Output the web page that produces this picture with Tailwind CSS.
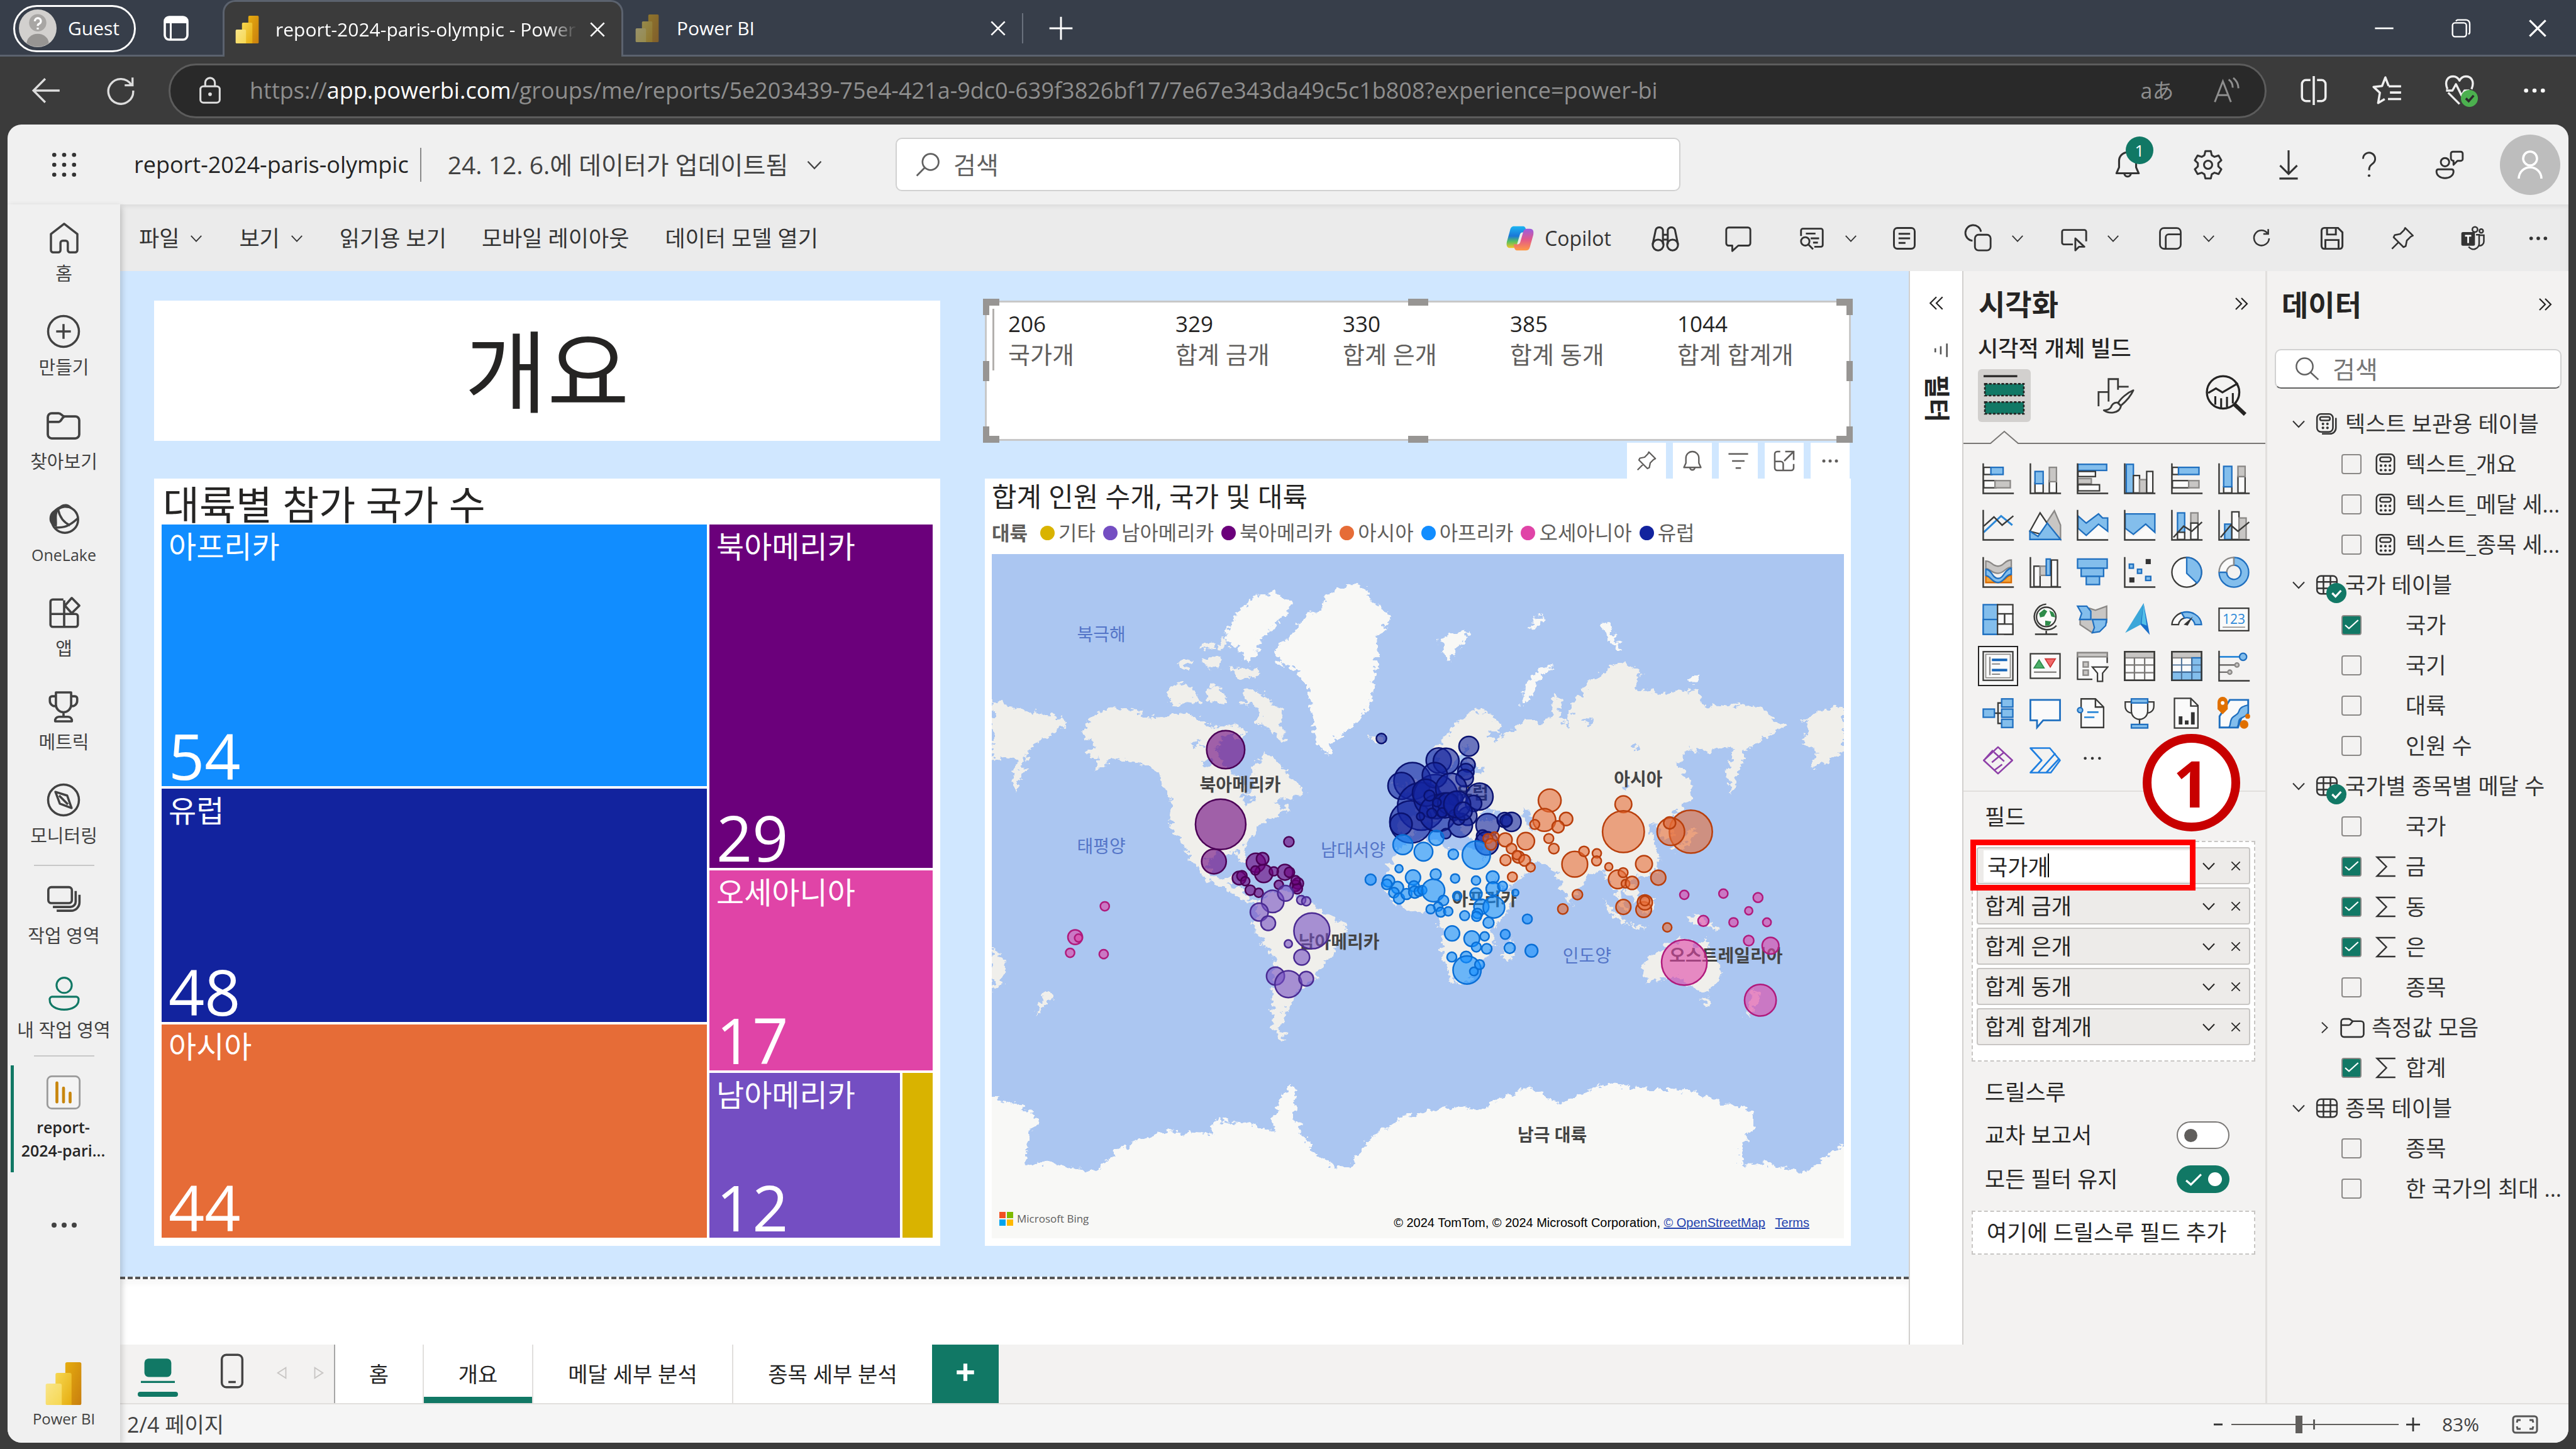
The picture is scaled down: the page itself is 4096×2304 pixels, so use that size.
<!DOCTYPE html>
<html lang="ko">
  <head>
    <meta charset="UTF-8" />
    <meta name="viewport" content="width=device-width, initial-scale=1.0" />
    <title>report-2024-paris-olympic - Power BI</title>
    <script src="https://cdn.jsdelivr.net/npm/@tailwindcss/browser@4"></script>
  </head>
  <body class="h-screen overflow-hidden bg-[#3b3b3b] text-[#242424] [font-family:'Open_Sans','Noto_Sans_CJK_KR',sans-serif]">
    <!-- icon sprite -->
    <svg class="absolute size-0">
      <defs>
        <linearGradient id="pbi1" x1="0" y1="0" x2="1" y2="1"><stop offset="0" stop-color="#e6ad10" /><stop offset="1" stop-color="#c87e0e" /></linearGradient>
        <linearGradient id="pbi2" x1="0" y1="0" x2="1" y2="1"><stop offset="0" stop-color="#f6d751" /><stop offset="1" stop-color="#e6ad10" /></linearGradient>
        <linearGradient id="pbi3" x1="0" y1="0" x2="1" y2="1"><stop offset="0" stop-color="#f9e589" /><stop offset="1" stop-color="#f6d751" /></linearGradient>
        <linearGradient id="cop1" x1="0" y1="0" x2="0" y2="1"><stop offset="0" stop-color="#1cb4f2" /><stop offset=".45" stop-color="#1a77d8" /><stop offset=".7" stop-color="#57c05f" /><stop offset="1" stop-color="#f7c325" /></linearGradient>
        <linearGradient id="cop2" x1="0" y1="0" x2="0" y2="1"><stop offset="0" stop-color="#9b5de0" /><stop offset=".5" stop-color="#e2588a" /><stop offset="1" stop-color="#ff9a45" /></linearGradient>
        <filter id="coast" x="0" y="0" width="1" height="1"><feTurbulence type="fractalNoise" baseFrequency=".08" numOctaves="4" seed="4" /><feDisplacementMap in="SourceGraphic" scale="26" xChannelSelector="R" yChannelSelector="G" /></filter>
      </defs>
      <symbol id="chev" viewBox="0 0 24 24"><path d="M3 7.500l9 9.500 9-9.500" fill="none" stroke="currentColor" stroke-width="2" /></symbol>
      <symbol id="x" viewBox="0 0 24 24"><path d="M4 4l16 16M20 4L4 20" fill="none" stroke="currentColor" stroke-width="2" /></symbol>
      <symbol id="dots" viewBox="0 0 24 24"><g fill="currentColor"><circle cx="4" cy="12" r="2" /><circle cx="12" cy="12" r="2" /><circle cx="20" cy="12" r="2" /></g></symbol>
      <symbol id="search" viewBox="0 0 24 24"><g fill="none" stroke="currentColor" stroke-width="1.500"><circle cx="14" cy="9.500" r="7" /><path d="M9 14.500l-7 7" /></g></symbol>
      <symbol id="search-l" viewBox="0 0 24 24"><g fill="none" stroke="currentColor" stroke-width="1.400"><circle cx="10" cy="9.500" r="7.500" /><path d="M15.500 15l7 6.500" /></g></symbol>
      <symbol id="pbi" viewBox="0 0 24 24"><rect x="13" y="0" width="9" height="24" rx="1" fill="url(#pbi1)" /><path d="M7.500 7a1 1 0 0 1 1-1h7a1 1 0 0 1 1 1v17h-9z" fill="url(#pbi2)" /><path d="M2 13a1 1 0 0 1 1-1h7a1 1 0 0 1 1 1v11H3a1 1 0 0 1-1-1z" fill="url(#pbi3)" /></symbol>
      <symbol id="calc" viewBox="0 0 24 24"><g fill="none" stroke="currentColor" stroke-width="1.600"><rect x="3" y="2" width="18" height="20" rx="4" /><rect x="6.500" y="5" width="11" height="4.500" rx="2" /></g><g fill="currentColor"><circle cx="7.500" cy="13.500" r="1.300" /><circle cx="12" cy="13.500" r="1.300" /><circle cx="16.500" cy="13.500" r="1.300" /><circle cx="7.500" cy="18" r="1.300" /><circle cx="12" cy="18" r="1.300" /><circle cx="16.500" cy="18" r="1.300" /></g></symbol>
      <symbol id="calcs" viewBox="0 0 24 24"><g fill="none" stroke="currentColor" stroke-width="1.600"><rect x="2" y="2" width="16" height="18" rx="4" /><rect x="5" y="5" width="10" height="3.500" rx="1.500" /><path d="M7 22h8a6 6 0 0 0 6-6V6" /></g><g fill="currentColor"><circle cx="8" cy="12" r="1.300" /><circle cx="12.500" cy="12" r="1.300" /><circle cx="8" cy="16" r="1.300" /><circle cx="12.500" cy="16" r="1.300" /></g></symbol>
      <symbol id="table" viewBox="0 0 24 24"><g fill="none" stroke="currentColor" stroke-width="1.600"><rect x="2" y="3" width="20" height="18" rx="4" /><path d="M2 9h20M2 15.500h20M8.500 3v18M15.500 3v18" /></g></symbol>
      <symbol id="sigma" viewBox="0 0 24 24"><path d="M22 2.500H3.500L13 12l-9.500 9.500H22" fill="none" stroke="currentColor" stroke-width="1.500" /></symbol>
      <symbol id="folder" viewBox="0 0 24 24"><path d="M2 9V6.500A2.500 2.500 0 0 1 4.500 4h4.300c1.800 0 2.200 2 3.800 2h6.900A2.500 2.500 0 0 1 22 8.500v9a2.500 2.500 0 0 1-2.500 2.500h-15A2.500 2.500 0 0 1 2 17.500zM2 9.500h7c1.800 0 2-3.500 4-3.500" fill="none" stroke="currentColor" stroke-width="1.500" /></symbol>
      <symbol id="pin" viewBox="0 0 24 24"><path d="M2.500 21.500l6-6M14.500 2.500l7 7-2 1-3.500 3.500-1 5-2 1-9-9 1-2 5-1L13.500 4.500z" fill="none" stroke="currentColor" stroke-width="1.500" stroke-linejoin="round" /></symbol>
      <symbol id="bell" viewBox="0 0 24 24"><path d="M12 2.500a6.500 6.500 0 0 1 6.500 6.500v5l2 4.500h-17l2-4.500V9A6.500 6.500 0 0 1 12 2.500zM9.500 18.500a2.500 2.500 0 0 0 5 0" fill="none" stroke="currentColor" stroke-width="1.500" stroke-linejoin="round" /></symbol>
    </svg>

    <div class="flex h-full flex-col">
      <!-- tab strip -->
      <header class="flex h-[90px] shrink-0 items-center bg-[#373e4a] text-[30px] leading-[40px] text-white shadow-[inset_0_-3px_0_#5b626e]">
        <button class="ml-[21px] flex h-[75px] w-[195px] shrink-0 items-center gap-[18px] rounded-full border-[3px] border-white bg-[#373e4a] pl-[6px]">
          <svg class="size-[60px] shrink-0" viewBox="0 0 24 24"><circle cx="12" cy="12" r="12" fill="#d2d0ce" /><path d="M5 21.500a7 6 0 0 1 14 0A12 12 0 0 1 5 21.500z" fill="#979593" /><circle cx="12" cy="8.500" r="5.500" fill="#a8a6a4" /><path d="M10.200 7.500a1.900 1.900 0 1 1 2.600 1.700c-.6.3-.8.600-.8 1.300M12 11.600v1.100" fill="none" stroke="#fff" stroke-width="1.300" /></svg>
          Guest
        </button>
        <button class="ml-[40px] shrink-0" aria-label="세로 탭">
          <svg class="size-[48px]" viewBox="0 0 24 24"><rect x="3" y="3" width="18" height="18" rx="3.500" fill="none" stroke="#fff" stroke-width="1.800" /><path d="M3 8V6a3 3 0 0 1 3-3h12a3 3 0 0 1 3 3v2zM7 8h1.500v13H7z" fill="#fff" /></svg>
        </button>
        <div class="ml-[50px] flex h-full w-[637px] shrink-0 items-center rounded-t-[20px] border-x-[3px] border-t-[3px] border-[#5b626e] bg-[#3b3b3b] pl-[14px]">
          <svg class="size-[44px] shrink-0"><use href="#pbi" /></svg>
          <span class="ml-[23px] w-[480px] overflow-hidden whitespace-nowrap [mask-image:linear-gradient(to_right,#000_90%,transparent)]">report-2024-paris-olympic - Power BI</span>
          <button class="ml-[16px]" aria-label="탭 닫기"><svg class="size-[32px]"><use href="#x" /></svg></button>
        </div>
        <div class="flex w-[636px] shrink-0 items-center pl-[16px]">
          <svg class="size-[44px] shrink-0 opacity-50"><use href="#pbi" /></svg>
          <span class="ml-[25px] flex-1">Power BI</span>
          <button class="mr-[22px]" aria-label="탭 닫기"><svg class="size-[32px]"><use href="#x" /></svg></button>
          <span class="h-[48px] w-[2px] bg-[#69707c]"></span>
        </div>
        <button class="ml-[38px]" aria-label="새 탭"><svg class="size-[44px]" viewBox="0 0 24 24"><path d="M12 2v20M2 12h20" stroke="#fff" stroke-width="1.600" /></svg></button>
        <div class="ml-auto flex items-center">
          <button class="flex w-[122px] justify-center" aria-label="최소화"><svg class="size-[32px]" viewBox="0 0 24 24"><path d="M1 12h22" stroke="#fff" stroke-width="2" /></svg></button>
          <button class="flex w-[122px] justify-center" aria-label="최대화"><svg class="size-[32px]" viewBox="0 0 24 24"><g fill="none" stroke="#fff" stroke-width="1.800"><rect x="2" y="5.500" width="16.500" height="16.500" rx="3" /><path d="M6 3.500A4 4 0 0 1 8 2h10a4.500 4.500 0 0 1 4.500 4.500V17a3 3 0 0 1-1.500 2" /></g></svg></button>
          <button class="flex w-[122px] justify-center" aria-label="닫기"><svg class="size-[38px]"><use href="#x" /></svg></button>
        </div>
      </header>

      <!-- address bar -->
      <div class="flex h-[108px] shrink-0 items-center text-white">
        <button class="flex w-[148px] justify-center" aria-label="뒤로"><svg class="size-[50px]" viewBox="0 0 24 24"><path d="M22 12H2.500M11 3l-9 9 9 9" fill="none" stroke="#ddd" stroke-width="1.600" /></svg></button>
        <button class="flex w-[88px] justify-center" aria-label="새로 고침"><svg class="size-[50px]" viewBox="0 0 24 24"><path d="M20 7.500A9.500 9.500 0 1 0 21.500 12M21 2v6h-6" fill="none" stroke="#ddd" stroke-width="1.600" /></svg></button>
        <div class="ml-[32px] flex h-[87px] flex-1 items-center rounded-full border-[3px] border-[#5c5c5c] bg-[#292929] text-[36px] leading-[48px] text-[#8e8e8e]">
          <svg class="ml-[40px] size-[46px]" viewBox="0 0 24 24"><g fill="none" stroke="#ddd" stroke-width="1.600"><rect x="4" y="8.500" width="16" height="13.500" rx="2.500" /><path d="M8 8.500V5.500a4 4 0 0 1 8 0v3" /></g><circle cx="12" cy="15" r="1.500" fill="#ddd" /></svg>
          <p class="ml-[40px] flex-1 whitespace-nowrap">https://<span class="text-white">app.powerbi.com</span>/groups/me/reports/5e203439-75e4-421a-9dc0-639f3826bf17/7e67e343da49c5c1b808?experience=power-bi</p>
          <button class="flex w-[110px] justify-center text-[34px] text-[#8e8e8e]" aria-label="번역">aあ</button>
          <button class="mr-[6px] flex w-[110px] justify-center" aria-label="소리내어 읽기"><svg class="size-[44px]" viewBox="0 0 24 24"><path d="M2 22L9 4l7 18M4.500 16h9M14 2.500a8 8 0 0 1 3.500 7M18 1a12 12 0 0 1 4.500 9" fill="none" stroke="#8e8e8e" stroke-width="1.600" /></svg></button>
        </div>
        <div class="flex items-center pr-[8px] pl-[16px]">
          <button class="flex w-[117px] justify-center" aria-label="화면 분할"><svg class="size-[50px]" viewBox="0 0 24 24"><path d="M9.500 4H6a3 3 0 0 0-3 3v10a3 3 0 0 0 3 3h3.500M14.500 4H18a3 3 0 0 1 3 3v10a3 3 0 0 1-3 3h-3.500M12 1v22" fill="none" stroke="#eee" stroke-width="1.700" /></svg></button>
          <button class="flex w-[117px] justify-center" aria-label="즐겨찾기"><svg class="size-[50px]" viewBox="0 0 24 24"><path d="M13 8.500L10.500 2 8 8.500l-6.500.7 4.800 4.500L5 21.500l5-3M13 8.800h9.500M14 13.500h8.500M12.500 18.500h10" fill="none" stroke="#eee" stroke-width="1.700" stroke-linejoin="round" /></svg></button>
          <button class="flex w-[117px] justify-center" aria-label="브라우저 필수 요소"><svg class="size-[54px]" viewBox="0 0 24 24"><path d="M2.500 11C0 5 3 2 6.500 2 9 2 10.500 4 11 5c.5-1 2-3 4.500-3C19 2 22 5 19.500 11M3 13.500l8 8M1.500 12H6l2.500-4.500 4 8 2-3.500H18" fill="none" stroke="#eee" stroke-width="1.500" stroke-linejoin="round" /><circle cx="18" cy="17.500" r="6" fill="#4cb04f" /><path d="M15.500 17.500l2 2 3.500-4" fill="none" stroke="#2c2c2c" stroke-width="1.600" /></svg></button>
          <button class="flex w-[117px] justify-center" aria-label="설정 및 기타"><svg class="size-[40px]"><use href="#dots" /></svg></button>
        </div>
      </div>

      <!-- page -->
      <div class="mx-[12px] mb-[10px] flex min-h-0 flex-1 flex-col overflow-hidden rounded-[22px] bg-[#f0f0f0]">
        <div class="flex h-[127px] shrink-0 items-center text-[#242424]">
          <button class="flex w-[179px] justify-center" aria-label="앱 시작 관리자"><svg class="size-[42px]" viewBox="0 0 24 24"><g fill="#333"><circle cx="3" cy="3" r="1.900" /><circle cx="12" cy="3" r="1.900" /><circle cx="21" cy="3" r="1.900" /><circle cx="3" cy="12" r="1.900" /><circle cx="12" cy="12" r="1.900" /><circle cx="21" cy="12" r="1.900" /><circle cx="3" cy="21" r="1.900" /><circle cx="12" cy="21" r="1.900" /><circle cx="21" cy="21" r="1.900" /></g></svg></button>
          <div class="flex w-[1233px] shrink-0 items-center pl-[22px] whitespace-nowrap">
            <span class="text-[36px] leading-[50px]">report-2024-paris-olympic</span>
            <span class="ml-[18px] h-[54px] w-[2px] bg-[#8a8a8a]"></span>
            <button class="ml-[42px] flex items-center gap-[28px] text-[39px] leading-[50px] text-[#424242]">24. 12. 6.에 데이터가 업데이트됨 <svg class="size-[28px]"><use href="#chev" /></svg></button>
          </div>
          <label class="flex h-[85px] min-w-0 flex-1 items-center rounded-[10px] border-[2px] border-[#d1d1d1] bg-white pl-[28px] text-[#616161]">
            <svg class="size-[44px] shrink-0"><use href="#search" /></svg>
            <input class="ml-[18px] w-full bg-transparent text-[39px] leading-[50px] outline-none placeholder:text-[#616161]" type="search" placeholder="검색" aria-label="검색" />
          </label>
          <div class="flex w-[1412px] shrink-0 items-center justify-end pr-[13px] text-[#333]">
            <button class="relative flex w-[128px] justify-center" aria-label="알림">
              <svg class="size-[50px]"><use href="#bell" /></svg>
              <span class="absolute -top-[20px] left-[61px] size-[44px] rounded-full bg-[#117865] text-center text-[26px] leading-[44px] text-white">1</span>
            </button>
            <button class="flex w-[128px] justify-center" aria-label="설정"><svg class="size-[52px]" viewBox="0 0 24 24"><g fill="none" stroke="currentColor" stroke-width="1.400" stroke-linejoin="round"><path d="M10 2h4l.7 3 2 1.200 3-1 2 3.500-2.200 2.100v2.400l2.200 2.100-2 3.500-3-1-2 1.200-.7 3h-4l-.7-3-2-1.200-3 1-2-3.500 2.200-2.100v-2.400L2.300 8.700l2-3.500 3 1 2-1.200z" /><circle cx="12" cy="12" r="3" /></g></svg></button>
            <button class="flex w-[128px] justify-center" aria-label="다운로드"><svg class="size-[50px]" viewBox="0 0 24 24"><path d="M12 1v18M5.500 12.500L12 19l6.500-6.500M5 22.500h14" fill="none" stroke="currentColor" stroke-width="1.500" /></svg></button>
            <button class="flex w-[128px] justify-center" aria-label="도움말"><svg class="size-[46px]" viewBox="0 0 24 24"><path d="M7 7a5 5 0 1 1 8 4c-2 1.500-3 2.500-3 5.500" fill="none" stroke="currentColor" stroke-width="1.500" /><circle cx="12" cy="21" r="1.100" fill="currentColor" /></svg></button>
            <button class="flex w-[128px] justify-center" aria-label="피드백"><svg class="size-[50px]" viewBox="0 0 24 24"><g fill="none" stroke="currentColor" stroke-width="1.400" stroke-linejoin="round"><circle cx="8.500" cy="10" r="3.200" /><path d="M3.500 15.500h10c1 0 1.500.7 1.500 1.700 0 3-3 5-6.500 5S2 20.200 2 17.200c0-1 .5-1.700 1.500-1.700zM13 3.500A1.500 1.500 0 0 1 14.500 2h6A1.500 1.500 0 0 1 22 3.500v4A1.500 1.500 0 0 1 20.500 9H18l-3 3V9a2 2 0 0 1-2-2z" /></g></svg></button>
            <button class="ml-[16px] flex size-[96px] items-center justify-center rounded-full bg-[#bdbdbd]" aria-label="계정"><svg class="size-[48px]" viewBox="0 0 24 24"><g fill="none" stroke="#fff" stroke-width="1.800"><circle cx="12" cy="7" r="5.500" /><path d="M3 23a9 9 0 0 1 18 0" /></g></svg></button>
          </div>
        </div>

        <div class="flex min-h-0 flex-1">
          <!-- left navigation -->
          <nav class="relative z-10 flex w-[179px] shrink-0 flex-col items-center bg-[#f0f0f0] pt-[2px] text-[29px] leading-[36px] text-[#424242] shadow-[2px_4px_10px_rgba(0,0,0,.2)]">
            <a href="#" class="flex h-[149px] flex-col items-center justify-center gap-[11px]"><svg class="size-[56px]" viewBox="0 0 24 24"><path d="M12 2.500L21 9.500V20.500a1.500 1.500 0 0 1-1.500 1.500H16a1.500 1.500 0 0 1-1.500-1.500V15.500A1.500 1.500 0 0 0 13 14h-2a1.500 1.500 0 0 0-1.500 1.500v5A1.500 1.500 0 0 1 8 22H4.500A1.500 1.500 0 0 1 3 20.500V9.500z" fill="none" stroke="currentColor" stroke-width="1.500" stroke-linejoin="round" /></svg>홈</a>
            <a href="#" class="flex h-[149px] flex-col items-center justify-center gap-[11px]"><svg class="size-[56px]" viewBox="0 0 24 24"><g fill="none" stroke="currentColor" stroke-width="1.500"><circle cx="12" cy="12" r="10.500" /><path d="M12 7v10M7 12h10" /></g></svg>만들기</a>
            <a href="#" class="flex h-[149px] flex-col items-center justify-center gap-[9px]"><svg class="size-[60px]"><use href="#folder" /></svg>찾아보기</a>
            <a href="#" class="flex h-[149px] flex-col items-center justify-center gap-[11px] text-[25px]"><svg class="size-[56px]" viewBox="0 0 24 24"><g fill="none" stroke="currentColor" stroke-width="1.500"><circle cx="12.500" cy="12.500" r="9" /><path d="M8 6c1 5 4 8.500 8 10.500M6 18c6 0 9-.5 15.500-6.500" /></g><path d="M2 12C2 8 4.500 6 7 5.500 9 3 11 1.500 14 2c2 .5 3.500 2 4 3.500-5-2-9-1-10.500 2-1 3 0 6-.5 10C4 17 2 15 2 12z" fill="currentColor" /></svg>OneLake</a>
            <a href="#" class="flex h-[149px] flex-col items-center justify-center gap-[9px]"><svg class="size-[58px]" viewBox="0 0 24 24"><path d="M11.500 3H4.500A1.500 1.500 0 0 0 3 4.500v15A1.500 1.500 0 0 0 4.500 21h15a1.500 1.500 0 0 0 1.500-1.500V14A1.500 1.500 0 0 0 19.500 12.500H3M12 3.500v17.500M12.500 7L17 2l5 5-5 5z" fill="none" stroke="currentColor" stroke-width="1.500" stroke-linejoin="round" /></svg>앱</a>
            <a href="#" class="flex h-[149px] flex-col items-center justify-center gap-[9px]"><svg class="size-[58px]" viewBox="0 0 24 24"><path d="M7 2.500h10v8a5 5 0 0 1-10 0zM7 5H4.500A1.500 1.500 0 0 0 3 6.500V8a3.500 3.500 0 0 0 4 3.500M17 5h2.500A1.500 1.500 0 0 1 21 6.500V8a3.500 3.500 0 0 1-4 3.500M12 15.500v3M9 18.500h6a2.500 2.500 0 0 1 2.500 3h-11A2.500 2.500 0 0 1 9 18.500z" fill="none" stroke="currentColor" stroke-width="1.500" stroke-linejoin="round" /></svg>메트릭</a>
            <a href="#" class="flex h-[149px] flex-col items-center justify-center gap-[11px]"><svg class="size-[56px]" viewBox="0 0 24 24"><g fill="none" stroke="currentColor" stroke-width="1.500" stroke-linejoin="round"><circle cx="12" cy="12" r="10.500" /><path d="M6.500 6.500l8 2.500 3 8.500-8-3z M9 9l6 6" /></g></svg>모니터링</a>
            <hr class="mt-[5px] mb-[1px] w-[96px] border-t-[2px] border-[#c8c8c8]" />
            <a href="#" class="flex h-[150px] flex-col items-center justify-center gap-[11px]"><svg class="size-[58px]" viewBox="0 0 24 24"><g fill="none" stroke="currentColor" stroke-width="1.500"><rect x="2" y="4" width="15.500" height="10.500" rx="2" /><path d="M5 17h11.500a3.500 3.500 0 0 0 3.500-3.500V6.500M7.500 19.500h9.500a5.500 5.500 0 0 0 5.500-5.500V9" /></g></svg>작업 영역</a>
            <a href="#" class="flex h-[150px] flex-col items-center justify-center gap-[11px]"><svg class="size-[58px] text-[#117865]" viewBox="0 0 24 24"><g fill="none" stroke="currentColor" stroke-width="1.300"><circle cx="12" cy="6.500" r="5" /><path d="M4 14h16a1.700 1.700 0 0 1 1.500 2c0 4-4 6.500-9.500 6.500S2.500 20 2.500 16A1.700 1.700 0 0 1 4 14z" /></g></svg>내 작업 영역</a>
            <hr class="w-[96px] border-t-[2px] border-[#c8c8c8]" />
            <a href="#" class="mt-[14px] ml-[5px] flex h-[170px] flex-col items-center self-stretch border-l-[5px] border-[#117865] pt-[15px] pr-[12px] text-center text-[25px] leading-[37px] font-semibold text-[#242424]">
              <svg class="mb-[9px] size-[56px] shrink-0" viewBox="0 0 24 24"><rect x="1" y="1" width="22" height="22" rx="3" fill="#f4f4f4" stroke="#9a9a9a" stroke-width="1.200" /><path d="M7.500 5.500v13M12 9v9.500M16.500 12.500v6" stroke="#c8860d" stroke-width="2" stroke-linecap="round" /></svg>
              <span>report-<br />2024-pari...</span>
            </a>
            <button class="mt-[60px]" aria-label="더 보기"><svg class="size-[48px]"><use href="#dots" /></svg></button>
            <a href="#" class="mt-auto mb-[20px] flex flex-col items-center gap-[4px] text-[24px]"><svg class="size-[68px]"><use href="#pbi" /></svg>Power BI</a>
          </nav>

          <div class="flex min-w-0 flex-1 flex-col">
            <!-- report toolbar -->
            <div class="flex h-[106px] shrink-0 items-center bg-[#ebebeb] pt-[2px] pl-[30px] text-[35px] leading-[46px] text-[#333] shadow-[inset_0_4px_6px_rgba(0,0,0,.06)] whitespace-nowrap">
              <button class="flex items-center gap-[16px]">파일 <svg class="size-[22px]"><use href="#chev" /></svg></button>
              <button class="ml-[57px] flex items-center gap-[16px]">보기 <svg class="size-[22px]"><use href="#chev" /></svg></button>
              <button class="ml-[57px]">읽기용 보기</button>
              <button class="ml-[56px]">모바일 레이아웃</button>
              <button class="ml-[57px]">데이터 모델 열기</button>
              <button class="mr-[26px] ml-auto flex items-center gap-[16px] text-[32px]">
                <svg class="size-[46px]" viewBox="0 0 24 24"><path d="M7 2h7c2 0 2.500 1 3 3l.5 2h-3c-2 0-2.500 1-3 3l-2 7c-.5 2-1.500 3-3.500 3H4c-3 0-3.500-2-3-5L3.500 6C4.200 3 5 2 7 2z" fill="url(#cop1)" /><path d="M17 22h-7c-2 0-2.500-1-3-3l-.3-2H9.500c2 0 2.500-1 3-3l2-7c.5-2 1.500-3 3.500-3h2c3 0 3.500 2 3 5l-2.500 9c-.7 3-1.500 4-3.500 4z" fill="url(#cop2)" /></svg>
                Copilot
              </button>
              <button class="flex w-[120px] justify-center" aria-label="찾기"><svg class="size-[46px]" viewBox="0 0 24 24"><g fill="none" stroke="currentColor" stroke-width="1.600"><circle cx="6" cy="17.500" r="4.500" /><circle cx="18" cy="17.500" r="4.500" /><path d="M1.500 17L4 5a3.200 3.200 0 0 1 6 0v12M22.500 17L20 5a3.200 3.200 0 0 0-6 0v12M10 9h4v4h-4z" /></g></svg></button>
              <button class="flex w-[112px] justify-center" aria-label="메모"><svg class="size-[46px]" viewBox="0 0 24 24"><path d="M4 3h16a2 2 0 0 1 2 2v11a2 2 0 0 1-2 2h-8l-5 4.500V18H4a2 2 0 0 1-2-2V5a2 2 0 0 1 2-2z" fill="none" stroke="currentColor" stroke-width="1.500" stroke-linejoin="round" /></svg></button>
              <button class="flex w-[152px] items-center gap-[28px] pl-[38px]" aria-label="탐색"><svg class="size-[46px]" viewBox="0 0 24 24"><g fill="none" stroke="currentColor" stroke-width="1.500"><path d="M3 10V5.500A1.500 1.500 0 0 1 4.500 4h15A1.500 1.500 0 0 1 21 5.500v12a1.500 1.500 0 0 1-1.500 1.500H14M7 8h8M11 12h7M13 15.500h4" /><circle cx="6.500" cy="14.500" r="3.500" /><path d="M9 17l4 4" /></g></svg><svg class="size-[22px]"><use href="#chev" /></svg></button>
              <button class="flex w-[112px] justify-center" aria-label="텍스트 상자"><svg class="size-[44px]" viewBox="0 0 24 24"><g fill="none" stroke="currentColor" stroke-width="1.600"><rect x="3" y="3" width="18" height="18" rx="3" /><path d="M7 8h10M7 12h10M7 16h6" /></g></svg></button>
              <button class="flex w-[152px] items-center gap-[28px] pl-[39px]" aria-label="셰이프"><svg class="size-[46px]" viewBox="0 0 24 24"><g fill="none" stroke="currentColor" stroke-width="1.500"><path d="M7 14A6.500 6.500 0 1 1 14 6.500" /><rect x="9" y="9" width="13" height="13" rx="3" /></g></svg><svg class="size-[22px]"><use href="#chev" /></svg></button>
              <button class="flex w-[152px] items-center gap-[28px] pl-[39px]" aria-label="단추"><svg class="size-[46px]" viewBox="0 0 24 24"><g fill="none" stroke="currentColor" stroke-width="1.500" stroke-linejoin="round"><path d="M11 17H3.500A1.500 1.500 0 0 1 2 15.500v-9A1.500 1.500 0 0 1 3.500 5h17A1.500 1.500 0 0 1 22 6.500v8" /><path d="M13 12v10l3-3h4.500z" /></g></svg><svg class="size-[22px]"><use href="#chev" /></svg></button>
              <button class="flex w-[152px] items-center gap-[28px] pl-[41px]" aria-label="페이지"><svg class="size-[44px]" viewBox="0 0 24 24"><g fill="none" stroke="currentColor" stroke-width="1.500"><rect x="3" y="3" width="18" height="18" rx="3.500" /><path d="M8 21V11a2.500 2.500 0 0 1 2.500-2.500H21" /></g></svg><svg class="size-[22px]"><use href="#chev" /></svg></button>
              <button class="flex w-[112px] justify-center" aria-label="새로 고침"><svg class="size-[34px]" viewBox="0 0 24 24"><path d="M20.500 12a8.500 8.500 0 1 1-2-6M19.500 1.500V7H14" fill="none" stroke="currentColor" stroke-width="1.800" /></svg></button>
              <button class="flex w-[112px] justify-center" aria-label="저장"><svg class="size-[42px]" viewBox="0 0 24 24"><g fill="none" stroke="currentColor" stroke-width="1.700"><path d="M5 2.500h12.500l4 4V19a2.500 2.500 0 0 1-2.500 2.500H5A2.500 2.500 0 0 1 2.500 19V5A2.500 2.500 0 0 1 5 2.500z" /><path d="M7.500 3v5.500h8V3M6 21v-7.500h12V21" /></g></svg></button>
              <button class="flex w-[112px] justify-center" aria-label="고정"><svg class="size-[42px]"><use href="#pin" /></svg></button>
              <button class="flex w-[112px] justify-center" aria-label="Teams에서 채팅"><svg class="size-[40px]" viewBox="0 0 24 24"><rect x="1" y="6" width="13" height="13" rx="1.500" fill="#333" /><path d="M4.500 9.500h6M7.500 9.500v7" stroke="#fff" stroke-width="1.600" /><g fill="none" stroke="currentColor" stroke-width="1.500"><circle cx="14" cy="3.500" r="2.500" /><circle cx="20" cy="5" r="1.800" /><path d="M15 8.500h3v8a5.500 5.500 0 0 1-10 3.500M18 9h4.500v6a4 4 0 0 1-4.500 4" /></g></svg></button>
              <button class="flex w-[96px] justify-center" aria-label="기타 옵션"><svg class="size-[34px]"><use href="#dots" /></svg></button>
            </div>

            <div class="flex min-h-0 flex-1">
              <div class="flex min-w-0 flex-1 flex-col">
                <div class="flex min-h-0 flex-1">
                  <!-- report canvas -->
                  <main class="flex min-w-0 flex-1 flex-col bg-white">
                    <div class="grid min-h-0 flex-1 grid-cols-[1250fr_1377fr] grid-rows-[223px_minmax(0,1fr)] gap-x-[71px] gap-y-[60px] border-b-[4px] border-dashed border-[#555] bg-[#d0e7ff] bg-clip-padding pt-[47px] pr-[92px] pb-[49px] pl-[54px]">
                      <section class="flex items-center justify-center bg-white">
                        <h1 class="text-[142px] leading-[180px] text-[#252423]">개요</h1>
                      </section>

                      <!-- multi-row card, selected -->
                      <section class="relative border-[3px] border-[#c8c8c8] bg-white">
                        <dl class="mt-[10px] ml-[9px] grid h-[98px] grid-cols-[266px_266px_266px_266px_266px] border-l-[3px] border-[#b3b0ad] pl-[22px] text-[#605e5c]">
                          <div class="flex flex-col-reverse"><dt class="text-[38px] leading-[52px]">국가개</dt><dd class="text-[35px] leading-[44px] text-[#252423]">206</dd></div>
                          <div class="flex flex-col-reverse"><dt class="text-[38px] leading-[52px]">합계 금개</dt><dd class="text-[35px] leading-[44px] text-[#252423]">329</dd></div>
                          <div class="flex flex-col-reverse"><dt class="text-[38px] leading-[52px]">합계 은개</dt><dd class="text-[35px] leading-[44px] text-[#252423]">330</dd></div>
                          <div class="flex flex-col-reverse"><dt class="text-[38px] leading-[52px]">합계 동개</dt><dd class="text-[35px] leading-[44px] text-[#252423]">385</dd></div>
                          <div class="flex flex-col-reverse"><dt class="text-[38px] leading-[52px]">합계 합계개</dt><dd class="text-[35px] leading-[44px] text-[#252423]">1044</dd></div>
                        </dl>
                        <span class="absolute -top-[6px] -left-[6px] size-[26px] border-t-[11px] border-l-[10px] border-[#979593]"></span>
                        <span class="absolute -top-[6px] -right-[6px] size-[26px] border-t-[11px] border-r-[10px] border-[#979593]"></span>
                        <span class="absolute -bottom-[6px] -left-[6px] size-[26px] border-b-[11px] border-l-[10px] border-[#979593]"></span>
                        <span class="absolute -right-[6px] -bottom-[6px] size-[26px] border-r-[10px] border-b-[11px] border-[#979593]"></span>
                        <span class="absolute -top-[6px] left-1/2 h-[11px] w-[32px] -translate-x-1/2 bg-[#979593]"></span>
                        <span class="absolute -bottom-[6px] left-1/2 h-[11px] w-[32px] -translate-x-1/2 bg-[#979593]"></span>
                        <span class="absolute top-1/2 -left-[6px] h-[32px] w-[10px] -translate-y-1/2 bg-[#979593]"></span>
                        <span class="absolute top-1/2 -right-[6px] h-[32px] w-[10px] -translate-y-1/2 bg-[#979593]"></span>
                      </section>

                      <!-- treemap -->
                      <section class="flex min-h-0 flex-col bg-white px-[12px] pt-[8px] pb-[13px]">
                        <h2 class="pl-[2px] text-[63px] leading-[65px] text-[#252423]">대륙별 참가 국가 수</h2>
                        <div class="grid min-h-0 flex-1 grid-cols-[867fr_355fr] gap-[4px] text-[48px] leading-[64px] text-white">
                          <div class="grid min-h-0 grid-rows-[416fr_371fr_339fr] gap-[4px]">
                            <div class="flex flex-col justify-between bg-[#118dff] px-[11px] pt-[3px]"><span>아프리카</span><b class="text-[100px] leading-[98px] font-normal">54</b></div>
                            <div class="flex flex-col justify-between bg-[#12239e] px-[11px] pt-[3px]"><span>유럽</span><b class="text-[100px] leading-[98px] font-normal">48</b></div>
                            <div class="flex flex-col justify-between bg-[#e66c37] px-[11px] pt-[3px]"><span>아시아</span><b class="text-[100px] leading-[98px] font-normal">44</b></div>
                          </div>
                          <div class="grid min-h-0 grid-rows-[546fr_319fr_262fr] gap-[4px]">
                            <div class="flex flex-col justify-between bg-[#6b007b] px-[11px] pt-[3px]"><span>북아메리카</span><b class="text-[100px] leading-[98px] font-normal">29</b></div>
                            <div class="flex flex-col justify-between bg-[#e044a7] px-[11px] pt-[3px]"><span>오세아니아</span><b class="text-[100px] leading-[98px] font-normal">17</b></div>
                            <div class="grid grid-cols-[303fr_48fr] gap-[4px]">
                              <div class="flex flex-col justify-between bg-[#744ec2] px-[11px] pt-[3px] whitespace-nowrap"><span>남아메리카</span><b class="text-[100px] leading-[98px] font-normal">12</b></div>
                              <div class="bg-[#d9b300]"></div>
                            </div>
                          </div>
                        </div>
                      </section>

                      <!-- map -->
                      <section class="relative flex min-h-0 flex-col bg-white px-[11px] pb-[12px]">
                        <div class="absolute -top-[57px] right-[2px] flex gap-[11px] text-[#605e5c]">
                          <button class="flex h-[57px] w-[62px] items-center justify-center bg-white" aria-label="시각적 개체 고정"><svg class="size-[36px]"><use href="#pin" /></svg></button>
                          <button class="flex h-[57px] w-[62px] items-center justify-center bg-white" aria-label="알림 설정"><svg class="size-[38px]"><use href="#bell" /></svg></button>
                          <button class="flex h-[57px] w-[62px] items-center justify-center bg-white" aria-label="필터"><svg class="size-[34px]" viewBox="0 0 24 24"><path d="M1 4h22M5 12h14M9 20h6" stroke="currentColor" stroke-width="1.800" /></svg></button>
                          <button class="flex h-[57px] w-[62px] items-center justify-center bg-white" aria-label="포커스 모드"><svg class="size-[38px]" viewBox="0 0 24 24"><path d="M8 2.500H5A2.500 2.500 0 0 0 2.500 5v14A2.500 2.500 0 0 0 5 21.500h14a2.500 2.500 0 0 0 2.500-2.500v-4M13 2.500h8.500V11M21 3l-9 9M2.500 12.500h6a2.500 2.500 0 0 1 2.500 2.500v6" fill="none" stroke="currentColor" stroke-width="1.600" /></svg></button>
                          <button class="flex h-[57px] w-[62px] items-center justify-center bg-white" aria-label="기타 옵션"><svg class="size-[30px]"><use href="#dots" /></svg></button>
                        </div>
                        <h2 class="text-[43px] leading-[58px] text-[#252423]">합계 인원 수개, 국가 및 대륙</h2>
                        <ul class="mt-[6px] mb-[12px] flex items-center gap-[12px] text-[32px] leading-[44px] text-[#605e5c] whitespace-nowrap">
                          <li class="mr-[8px] text-[31px] font-semibold">대륙</li>
                          <li class="flex items-center gap-[6px]"><i class="size-[23px] rounded-full bg-[#d9b300]"></i>기타</li>
                          <li class="flex items-center gap-[6px]"><i class="size-[23px] rounded-full bg-[#744ec2]"></i>남아메리카</li>
                          <li class="flex items-center gap-[6px]"><i class="size-[23px] rounded-full bg-[#6b007b]"></i>북아메리카</li>
                          <li class="flex items-center gap-[6px]"><i class="size-[23px] rounded-full bg-[#e66c37]"></i>아시아</li>
                          <li class="flex items-center gap-[6px]"><i class="size-[23px] rounded-full bg-[#118dff]"></i>아프리카</li>
                          <li class="flex items-center gap-[6px]"><i class="size-[23px] rounded-full bg-[#e044a7]"></i>오세아니아</li>
                          <li class="flex items-center gap-[6px]"><i class="size-[23px] rounded-full bg-[#12239e]"></i>유럽</li>
                        </ul>
                        <div class="relative min-h-0 flex-1 overflow-hidden bg-[#abc6f1] text-[28px] leading-[36px] whitespace-nowrap">
                          <svg class="absolute inset-0 size-full" viewBox="25 9 1523 1529" preserveAspectRatio="none">
                            <g filter="url(#coast)" stroke="none">
                              <g fill="#f0efeb">
                                <path d="M195 385L205 368 225 357 260 352 285 358 300 375 340 370 375 365 400 380 430 400 460 385 465 400 440 420 425 445 440 480 460 500 470 510 480 545 495 530 490 490 505 470 510 450 530 465 545 490 560 510 585 535 575 550 530 562 555 580 525 600 500 615 490 640 475 660 482 700 472 695 462 675 430 675 412 690 412 715 430 735 455 730 452 750 472 755 485 780 500 785 495 795 465 775 440 755 410 740 390 710 370 665 350 630 343 600 345 560 335 530 325 500 300 480 270 470 245 465 225 480 205 495 215 470 195 455 208 432 190 415z" />
                                <path d="M500 785L520 765 550 760 580 780 600 790 620 815 655 832 660 850 640 880 635 910 615 930 600 960 575 985 565 1000 555 1020 545 1050 540 1070 550 1095 535 1088 527 1065 527 1010 530 960 532 920 512 880 498 850 488 835 500 810z" />
                                <path d="M755 660L780 650 820 645 830 660 850 675 870 665 900 675 912 700 925 740 940 765 965 768 950 800 930 830 918 850 925 880 910 905 900 930 880 962 850 968 840 935 828 890 835 860 825 835 820 812 800 805 770 808 745 790 730 765 725 740 738 700z" />
                                <path d="M943 885L956 868 957 890 948 920 939 915z" />
                                <path d="M750 600L785 595 785 570 770 558 800 545 815 525 840 520 845 500 860 508 900 500 905 488 880 482 872 462 880 430 860 455 850 480 830 492 820 470 820 440 840 410 860 380 885 358 910 362 930 385 935 410 912 405 925 430 940 410 960 400 975 380 1000 380 1005 390 1025 375 1030 325 1042 330 1040 370 1055 395 1060 350 1090 300 1130 262 1155 250 1185 272 1175 310 1230 320 1290 310 1300 350 1345 345 1400 350 1422 375 1440 395 1425 405 1400 425 1375 440 1360 500 1347 545 1338 500 1350 450 1340 440 1310 450 1270 445 1250 475 1275 520 1275 560 1245 590 1228 602 1242 640 1226 648 1215 612 1200 615 1205 650 1218 680 1212 720 1190 735 1178 728 1170 740 1185 770 1175 788 1160 765 1150 745 1148 770 1165 812 1155 805 1140 765 1130 740 1115 715 1095 725 1080 745 1065 770 1060 795 1045 760 1035 720 1005 700 985 690 995 708 965 738 942 755 925 735 910 700 900 660 870 640 860 615 840 600 820 600 795 610 780 640 752 640z" />
                                <path d="M25 335L60 350 95 362 150 375 158 392 140 405 115 425 90 445 80 500 68 538 62 510 72 470 45 465 25 472z" />
                                <path d="M1548 350L1505 358 1475 380 1485 400 1473 430 1498 455 1490 490 1520 472 1548 450z" />
                                <path d="M1190 915L1215 900 1235 880 1260 868 1278 872 1285 893 1300 865 1312 905 1328 930 1325 965 1300 990 1280 978 1250 952 1215 962 1195 968 1190 940z" />
                                <path d="M25 885L42 910 50 940 42 970 25 990z" />
                                <path d="M1265 815L1290 820 1325 848 1300 842 1280 835z" />
                                <path d="M1240 665L1262 650 1275 620 1282 628 1270 660 1250 672z" />
                                <path d="M1115 780L1140 805 1160 830 1150 835 1130 810zM1180 790L1205 775 1205 805 1190 815zM1158 835L1200 843 1180 847z" />
                                <path d="M1385 980L1398 990 1385 1030 1372 1045 1380 1020zM1297 1003l12 2-6 14z" />
                                <path d="M125 985l10 8-15 25-15 20 5-20z" />
                                <path d="M770 500L785 520 795 545 765 550 772 530zM745 525l14 0 0 15-14 0zM700 415l25 0 0 12-20 5z" />
                                <path d="M345 305L368 298 390 318 398 345 372 340 350 350 342 330zM408 310L425 300 445 325 440 345 425 338 412 342zM355 252L370 240 385 245 372 268 358 262zM400 250L415 238 438 240 430 258 410 262zM450 258L470 268 500 262 503 278 475 290 462 280zM395 215l22-10 8 12-20 8zM430 200l12-5 6 22-14 4z" />
                                <path d="M475 308L505 315 525 340 545 362 540 385 555 432 540 425 520 400 498 388 508 362 490 345 478 350zM452 398L470 392 478 408 466 425 456 412z" />
                              </g>
                              <g fill="#f8f8f6">
                                <path d="M530 220L560 190 585 150 615 130 625 98 670 75 695 85 705 115 740 145 733 165 715 190 715 260 705 300 700 350 665 400 640 420 625 458 610 440 602 400 597 360 590 310 570 270 535 250z" />
                                <path d="M470 130L500 100 530 95 562 115 550 150 530 165 520 195 500 200 500 235 480 250 472 225 445 200 450 170z" />
                                <path d="M825 200L850 185 878 182 865 205 840 250 832 225zM990 160l20-15 0 20-25 12zM1115 158L1130 165 1138 200 1155 225 1140 220 1122 190z" />
                                <path d="M970 345L980 300 1005 265 1028 260 1000 290 990 320 978 348zM1272 280l20 0-5 14-14 0z" />
                                <path d="M25 1222L60 1235 100 1260 108 1280 90 1310 85 1375 130 1368 210 1390 250 1340 330 1300 415 1305 425 1275 480 1280 530 1300 525 1270 545 1220 562 1195 570 1210 565 1270 580 1300 600 1345 640 1378 665 1378 695 1320 760 1265 840 1245 900 1250 920 1235 985 1198 1010 1215 1040 1240 1100 1205 1130 1192 1200 1205 1240 1205 1280 1210 1330 1235 1385 1255 1385 1290 1365 1330 1365 1375 1400 1370 1480 1390 1520 1350 1560 1320 1560 1560 10 1560 10 1222z" />
                              </g>
                              <!-- inland water -->
                              <path d="M895 592L915 580 950 595 945 605 900 603zM975 575L990 590 995 625 980 622zM475 545L500 555 490 565 470 558zM1150 530L1165 515 1160 535zM380 430l18-6 4 14-16 2zM400 470l14-4 2 12-12 2zM1085 380l12-8 4 16-10 4zM1170 440l6-8 6 12-8 4z" fill="#abc6f1" />
                            </g>
                          </svg>
                          <span class="absolute top-[10%] left-[10%] text-[#5475c8]">북극해</span>
                          <span class="absolute top-[41%] left-[10%] text-[#5475c8]">태평양</span>
                          <span class="absolute top-[41.5%] left-[38.6%] text-[#5475c8]">남대서양</span>
                          <span class="absolute top-[57%] left-[67%] text-[#5475c8]">인도양</span>
                          <span class="absolute top-[32%] left-[24.4%] font-semibold text-[#444]">북아메리카</span>
                          <span class="absolute top-[31.2%] left-[73%] font-semibold text-[#444]">아시아</span>
                          <span class="absolute top-[33.2%] left-[54.5%] font-semibold text-[#444]">유럽</span>
                          <span class="absolute top-[48.7%] left-[54%] font-semibold text-[#444]">아프리카</span>
                          <span class="absolute top-[55%] left-[36%] font-semibold text-[#444]">남아메리카</span>
                          <span class="absolute top-[57%] left-[79.5%] font-semibold text-[#444]">오스트레일리아</span>
                          <span class="absolute top-[83.2%] left-[61.7%] font-semibold text-[#444]">남극 대륙</span>
                          <svg id="bubbles" class="absolute inset-0 size-full" viewBox="25 9 1523 1529" preserveAspectRatio="none" fill-opacity=".6"></svg>
                          <div class="absolute bottom-[18px] left-[12px] flex items-center gap-[6px] text-[17px] leading-[26px] text-[#606060]">
                            <span class="grid grid-cols-[10px_10px] grid-rows-[10px_10px] gap-[2px]"><i class="bg-[#f25022]"></i><i class="bg-[#7fba00]"></i><i class="bg-[#00a4ef]"></i><i class="bg-[#ffb900]"></i></span>
                            Microsoft Bing
                          </div>
                          <p class="absolute right-[55px] bottom-[12px] text-[20px] leading-[26px] text-black [font-family:'Liberation_Sans',sans-serif]">© 2024 TomTom, © 2024 Microsoft Corporation, <a class="text-[#1f3fae] underline" href="#">© OpenStreetMap</a> <a class="ml-[10px] text-[#1f3fae] underline" href="#">Terms</a></p>
                        </div>
                      </section>
                    </div>
                    <div class="h-[104px] shrink-0 shadow-[inset_0_8px_10px_rgba(0,0,0,.03)]"></div>
                  </main>

                  <!-- collapsed filter pane -->
                  <aside class="flex w-[87px] shrink-0 flex-col items-center border-x-[2px] border-[#d2d0ce] bg-white pt-[38px]">
                    <button aria-label="필터 창 확장"><svg class="size-[26px]" viewBox="0 0 24 24"><path d="M12 3l-9 9 9 9M21 3l-9 9 9 9" fill="none" stroke="#252423" stroke-width="2" /></svg></button>
                    <svg class="mt-[49px] ml-[16px] size-[26px]" viewBox="0 0 24 24"><path d="M3 9v6M11 6v12M20 2v20" stroke="#555" stroke-width="2.400" /></svg>
                    <span class="mt-[26px] ml-[4px] text-[41px] leading-[48px] font-bold [text-orientation:sideways] [writing-mode:vertical-rl]">필터</span>
                  </aside>
                </div>

                <!-- page tabs -->
                <div class="flex h-[93px] shrink-0 items-stretch bg-[#f3f2f1] text-[34px] leading-[46px]">
                  <button class="ml-[28px] flex w-[64px] flex-col items-center justify-between pt-[20px] pb-[10px]" aria-label="웹 레이아웃"><svg class="size-[54px]" viewBox="0 0 24 24"><rect x="2.500" y="1" width="19" height="13" rx="3" fill="#117865" /><path d="M0 17.500h24" stroke="#117865" stroke-width="1.500" /></svg><span class="h-[8px] w-full rounded-full bg-[#117865]"></span></button>
                  <button class="ml-[58px] flex w-[56px] items-center justify-center pb-[10px]" aria-label="모바일 레이아웃"><svg class="size-[56px]" viewBox="0 0 24 24"><rect x="5" y="1" width="14" height="22" rx="3" fill="none" stroke="#444" stroke-width="1.500" /><path d="M9.500 19.500h5" stroke="#444" stroke-width="1.500" /></svg></button>
                  <button class="ml-[41px] pb-[4px]" aria-label="이전 페이지"><svg class="size-[22px]" viewBox="0 0 24 24"><path d="M18 3v18L4 12z" fill="none" stroke="#c8c6c4" stroke-width="2" /></svg></button>
                  <button class="ml-[35px] pb-[4px]" aria-label="다음 페이지"><svg class="size-[22px]" viewBox="0 0 24 24"><path d="M6 3v18l14-9z" fill="none" stroke="#c8c6c4" stroke-width="2" /></svg></button>
                  <div class="ml-[14px] flex border-l-[2px] border-[#a6a6a6] bg-white">
                    <button class="w-[139px]">홈</button>
                    <button class="w-[176px] border-x-[2px] border-[#e1dfdd] shadow-[inset_0_-10px_0_#117865]">개요</button>
                    <button class="w-[316px]">메달 세부 분석</button>
                    <button class="w-[318px] border-l-[2px] border-[#e1dfdd]">종목 세부 분석</button>
                    <button class="flex w-[106px] items-center justify-center bg-[#117865] pb-[6px]" aria-label="새 페이지"><svg class="size-[30px]" viewBox="0 0 24 24"><path d="M12 1v22M1 12h22" stroke="#fff" stroke-width="5" /></svg></button>
                  </div>
                </div>
              </div>

              <!-- visualizations pane -->
              <aside class="relative flex w-[483px] shrink-0 flex-col border-r-[3px] border-[#e1dfdd] bg-[#f3f2f1] text-[35px] leading-[46px] text-[#252423]">
                <div class="flex items-center justify-between pt-[22px] pr-[26px] pl-[24px]">
                  <h2 class="text-[46px] leading-[60px] font-semibold">시각화</h2>
                  <button aria-label="창 축소"><svg class="size-[24px]" viewBox="0 0 24 24"><path d="M3 3l9 9-9 9M12 3l9 9-9 9" fill="none" stroke="#252423" stroke-width="2.200" /></svg></button>
                </div>
                <h3 class="mt-[18px] pl-[23px] font-medium">시각적 개체 빌드</h3>
                <div class="mt-[10px] flex justify-between pr-[20px] pl-[23px]">
                  <button class="flex size-[84px] items-center justify-center rounded-[6px] bg-[#d2d0ce]" aria-label="시각적 개체 빌드"><svg class="h-[66px] w-[66px]" viewBox="0 0 32 32"><path d="M0 1h26" stroke="#252423" stroke-width="1.600" /><g fill="#117865" stroke="#252423" stroke-width="1.300" stroke-dasharray="2 1.200"><rect x="1" y="7" width="30" height="9" /><rect x="1" y="21" width="30" height="9" /></g></svg></button>
                  <button class="flex size-[84px] items-center justify-center" aria-label="시각적 개체 서식"><svg class="size-[60px]" viewBox="0 0 32 32"><path d="M1.500 25V13H10V2h8v9M18 8.500h9M10 13v8" fill="none" stroke="#3a3a38" stroke-width="1.500" /><path d="M31 11.500c-5 2-11 7-13 11l2.500 2C24 21.500 29 16 31 11.500zM18 22c-3-.500-5 1-6 4-1.500 2-3 2.500-6 2.500 4 3 13 3 14.500-3.500z" fill="#f3f2f1" stroke="#3a3a38" stroke-width="1.500" stroke-linejoin="round" /></svg></button>
                  <button class="flex size-[84px] items-center justify-center" aria-label="분석"><svg class="size-[66px]" viewBox="0 0 32 32"><circle cx="13.500" cy="13.500" r="12.500" fill="none" stroke="#252423" stroke-width="1.600" /><path d="M2 14l6-3.500 5 3L25 6.500M7.500 16.500v6.500M12 18v8M16.500 17v8M21 14v8" fill="none" stroke="#252423" stroke-width="1.500" /><path d="M22 22.500l8.500 8" stroke="#252423" stroke-width="3" /></svg></button>
                </div>
                <svg class="mt-[12px] h-[24px] w-full shrink-0" viewBox="0 0 480 24" fill="none"><path d="M0 22h43l22-19 22 19h393" stroke="#797775" stroke-width="2" /></svg>

                <div class="ml-[17px] grid shrink-0 grid-cols-[75px_75px_75px_75px_75px_75px] grid-rows-[75px_74px_75px_75px_74px_75px_75px] place-items-center pt-[16px]" id="visuals"></div>

                <h3 class="mt-[11px] border-t-[2px] border-[#e1dfdd] pt-[17px] pl-[34px]">필드</h3>
                <div class="relative mr-[16px] ml-[13px] mt-[15px] flex flex-col gap-[5px] border-[2px] border-dashed border-[#c8c6c4] bg-white pt-[8px] pr-[6px] pb-[24px] pl-[6px]" id="fields">
                  <div class="flex h-[59px] items-center rounded-[4px] border-[2px] border-[#c8c6c4] bg-[#edebe9] pl-[9px]">
                    <input class="h-[50px] w-[328px] bg-white pl-[6px] text-[35px] outline-none" value="국가개" aria-label="필드 이름" />
                    <button class="ml-[18px]" aria-label="옵션"><svg class="size-[24px]"><use href="#chev" /></svg></button>
                    <button class="ml-[21px]" aria-label="제거"><svg class="size-[20px]"><use href="#x" /></svg></button>
                  </div>
                  <!-- highlight over the renamed field -->
                  <span class="pointer-events-none absolute -top-[4px] -left-[4px] h-[81px] w-[358px] border-[9px] border-[#ff0000]"></span>
                  <span class="pointer-events-none absolute top-[18px] left-[119px] h-[38px] w-[2px] bg-black"></span>
                </div>
                <h3 class="mt-[26px] pl-[34px]">드릴스루</h3>
                <label class="mt-[22px] flex items-center justify-between pr-[57px] pl-[34px]">교차 보고서
                  <span class="relative h-[44px]"><input type="checkbox" role="switch" class="block h-[44px] w-[84px] appearance-none rounded-full border-[2px] border-[#797775] bg-white" /><i class="pointer-events-none absolute top-[12px] left-[12px] size-[21px] rounded-full bg-[#605e5c]"></i></span>
                </label>
                <label class="mt-[24px] flex items-center justify-between pr-[57px] pl-[34px]">모든 필터 유지
                  <span class="relative h-[44px]"><input type="checkbox" role="switch" checked class="block h-[44px] w-[84px] appearance-none rounded-full bg-[#117865]" /><i class="pointer-events-none absolute top-[11px] right-[12px] size-[22px] rounded-full bg-white"></i><svg class="pointer-events-none absolute top-[10px] left-[14px] size-[26px]" viewBox="0 0 24 24"><path d="M1 13l7 6L23 4" fill="none" stroke="#fff" stroke-width="3" /></svg></span>
                </label>
                <div class="mr-[16px] mt-[27px] ml-[13px] border-[2px] border-dashed border-[#c8c6c4] bg-white py-[10px] pl-[22px] whitespace-nowrap">여기에 드릴스루 필드 추가</div>
                <div class="absolute top-[736px] left-[285px] flex size-[155px] items-center justify-center rounded-full border-[14px] border-[#c80000] bg-white text-[102px] leading-[120px] font-bold text-[#c80000]">1</div>
              </aside>

              <!-- data pane -->
              <aside class="w-[479px] shrink-0 bg-[#f3f2f1] text-[35px] leading-[46px] text-[#333]">
                <div class="flex items-center justify-between pt-[23px] pr-[25px] pl-[23px]">
                  <h2 class="text-[46px] leading-[60px] font-semibold text-[#252423]">데이터</h2>
                  <button aria-label="창 축소"><svg class="size-[24px]" viewBox="0 0 24 24"><path d="M3 3l9 9-9 9M12 3l9 9-9 9" fill="none" stroke="#252423" stroke-width="2.200" /></svg></button>
                </div>
                <label class="mr-[11px] ml-[12px] mt-[41px] flex h-[63px] items-center rounded-[10px] border-[2px] border-[#d1d1d1] border-b-[#616161] bg-white pl-[28px] text-[#616161]">
                  <svg class="size-[42px] shrink-0"><use href="#search-l" /></svg>
                  <input class="ml-[20px] w-full bg-transparent text-[39px] outline-none placeholder:text-[#757575]" type="search" placeholder="검색" aria-label="필드 검색" />
                </label>
                <ul class="mt-[24px]" id="tree"></ul>
              </aside>
            </div>

            <!-- status bar -->
            <footer class="flex h-[63px] shrink-0 items-center border-t-[2px] border-[#e1dfdd] bg-[#f5f5f5] pt-[2px] pl-[11px] text-[34px] leading-[44px] text-[#424242]">
              <span>2/4 페이지</span>
              <button class="mr-[14px] ml-auto" aria-label="축소"><svg class="block size-[14px]" viewBox="0 0 24 24"><path d="M0 12h24" stroke="#333" stroke-width="5" /></svg></button>
              <span class="relative flex h-[28px] items-center"><input type="range" min="0" max="100" value="40" aria-label="확대/축소" class="h-[2px] w-[266px] appearance-none bg-[#605e5c] [&::-webkit-slider-thumb]:h-[28px] [&::-webkit-slider-thumb]:w-[11px] [&::-webkit-slider-thumb]:appearance-none [&::-webkit-slider-thumb]:bg-[#605e5c]" /><i class="absolute left-[130px] h-[16px] w-[3px] bg-[#605e5c]"></i></span>
              <button class="ml-[12px]" aria-label="확대"><svg class="block size-[22px]" viewBox="0 0 24 24"><path d="M0 12h24M12 0v24" stroke="#333" stroke-width="3" /></svg></button>
              <span class="ml-[35px] text-[30px]">83%</span>
              <button class="mr-[48px] ml-[52px]" aria-label="페이지에 맞춤"><svg class="block h-[30px] w-[42px]" viewBox="0 0 42 30"><g fill="none" stroke="#555" stroke-width="3"><rect x="2" y="2" width="38" height="26" rx="4" /><path d="M8 12l1-4h5M8 18l1 4h5M34 12l-1-4h-5M34 18l-1 4h-5" /></g></svg></button>
            </footer>
          </div>
        </div>
      </div>
    </div>

    <script>
      // B blue, G gray, W white, K outline only
      const B = 'fill="#83beec" stroke="#1f6fbf" stroke-width="1.400"';
      const G = 'fill="#c8c6c4" stroke="#8a8886" stroke-width="1.400"';
      const W = 'fill="#fafafa" stroke="#3a3a38" stroke-width="1.400"';
      const K = 'fill="none" stroke="#3a3a38" stroke-width="1.500"';
      const axis = `<path d="M1.500 1v29.500h30" ${K}/>`;
      const r = (x, y, w, h, s) => `<rect x="${x}" y="${y}" width="${w}" height="${h}" ${s}/>`;
      const p = (d, s) => `<path d="${d}" ${s}/>`;

      const visuals = [
        ["누적 가로 막대형 차트", r(2, 5, 8, 7, W) + r(9, 5, 12, 7, B) + r(2, 18, 12, 7, W) + r(13, 18, 15, 7, G) + axis],
        ["누적 세로 막대형 차트", r(6, 20, 8, 10, W) + r(6, 9, 8, 12, B) + r(20, 18, 7, 12, W) + r(20, 5, 7, 14, G) + axis],
        ["묶은 가로 막대형 차트", r(2, 2, 28, 6, B) + r(2, 9, 17, 5, W) + r(2, 16, 13, 5, G) + r(2, 22, 21, 6, W) + axis],
        ["묶은 세로 막대형 차트", r(3, 2, 7, 28, B) + r(10, 13, 6, 17, W) + r(16, 17, 7, 13, G) + r(23, 9, 6, 21, W) + axis],
        ["100% 누적 가로 막대형 차트", r(2, 5, 6, 7, W) + r(8, 5, 20, 7, B) + r(2, 18, 16, 7, W) + r(18, 18, 10, 7, G) + axis],
        ["100% 누적 세로 막대형 차트", r(6, 24, 8, 6, W) + r(6, 4, 8, 20, B) + r(20, 14, 7, 16, W) + r(20, 4, 7, 10, G) + axis],

        ["꺾은선형 차트", p("M2 23L19 7l11 9", 'fill="none" stroke="#2b88d8" stroke-width="1.800"') + p("M2 17l10-9 8 8L31 7", K) + axis],
        ["영역형 차트", p("M17 14L25 2l6 14v14z", G) + p("M1 22L11 4l17 25z", W) + p("M1 22l8 5 9-13 13 16H1z", B)],
        ["누적 영역형 차트", p("M2 24l9 3 11-11 9 6v8H2z", 'fill="#fafafa"') + p("M2 7l8 7 12-9 4 4h5v13l-9-7-12 11-8-7z", B) + axis],
        ["리본 영역형 차트", p("M2 24l9 3 11-9 9 4v8H2z", 'fill="#fafafa"') + p("M2 5h29v18l-9-8-12 10-8-6z", B) + axis],
        ["꺾은선형 및 누적 세로 막대형 차트", r(7, 4, 7, 20, B) + r(7, 23, 7, 7, W) + r(20, 4, 7, 10, G) + r(20, 14, 7, 16, W) + p("M3 28l10-11 8 5L31 13", K) + axis],
        ["꺾은선형 및 묶은 세로 막대형 차트", r(7, 15, 7, 15, B) + r(14, 3, 7, 27, W) + r(21, 9, 7, 21, G) + p("M3 28l10-12 7 6L31 13", K) + axis],

        ["리본 차트", p("M4 20h5c6 0 5 4 10 4s5-5 10-5v7H4z", 'fill="#f2a33a" stroke="#d86a00" stroke-width="1.400"') + p("M4 5c6 0 6 5 12 5s6-6 13-6v7c-6 0-7 6-13 6S9 13 4 12z", G) + p("M4 13c6 0 6 9 12 9s6-9 13-10v6c-6 0-7 8-13 8S9 20 4 19z", B) + axis],
        ["폭포 차트", r(5, 10, 6, 20, W) + r(11, 10, 6, 9, G) + r(17, 3, 4, 16, B) + r(22, 4, 6, 26, W) + axis],
        ["깔때기", r(1.5, 3, 29, 9, B) + r(5, 12, 22, 8, B) + r(10, 20, 13, 8, B)],
        ["분산형 차트", r(6, 8, 4, 4, B) + r(14, 13, 4, 4, B) + r(22, 20, 5, 4, B) + r(22, 3, 5, 5, 'fill="#333"') + r(6, 21, 5, 5, 'fill="#333"') + axis],
        ["원형 차트", `<circle cx="16" cy="16" r="14.500" ${W}/>` + p("M16 1.500A14.500 14.500 0 0 1 26 26.500L16 17z", B)],
        ["도넛형 차트", `<circle cx="16" cy="16" r="10.500" fill="none" stroke="#fafafa" stroke-width="7.500"/>` + p("M16 1.500A14.500 14.500 0 1 1 1.500 16H9a7 7 0 1 0 7-7z", B) + p("M1.500 16A14.500 14.500 0 0 1 16 1.500V9a7 7 0 0 0-7 7", G.replace("#c8c6c4", "none"))],

        ["트리맵", r(1.5, 1.5, 14, 29, B) + r(1.5, 16, 14, 14.5, B) + r(15.5, 1.5, 15, 9, W) + r(15.5, 10.5, 7, 10, W) + r(22.5, 10.5, 8, 20, W) + r(15.5, 20.5, 15, 10, W)],
        ["맵", `<circle cx="17" cy="13.500" r="9.500" ${W}/>` + p("M10 10l5-4 3 2-3 5-4 1zM20 7l4 2 2 5-4-1zM16 17l6 1-2 4-4 0z", 'fill="#2e8b4a"') + p("M17 1A12.500 12.500 0 1 0 27 22M6 30.500h22M17 27v4", K)],
        ["등치 지역도", p("M13 5l6 2 11-4v16l-6 7-8 3-12-8 0-6z", G) + p("M1.500 3h9l4 5v8h-11l2-6z", B) + p("M16 16h14l-1 6-6 6-7 1 2-5z", B)],
        ["Azure 맵", p("M20 0L2 29l17-9z", 'fill="#3ba7d9"') + p("M20 0l6 31-9-10z", 'fill="#1a6fc9"') + p("M20 0l3 22-5-2z", 'fill="#54c0e8"')],
        ["계기", p("M1.500 21A14.500 13 0 0 1 11 9.500l3 5A8 8 0 0 0 8 21z", W) + p("M11 9.500A14.500 13 0 0 1 30.500 21H24a8 8 0 0 0-10-6.500z", B) + p("M13 21l9-8-5 9z", 'fill="#333"')],
        ["카드", r(1.5, 5, 29, 22, W) + `<text x="16" y="20" text-anchor="middle" font-size="13" fill="#2b88d8">123</text>` + p("M5 23.500h22", 'stroke="#8a8886"')],

        ["여러 행 카드", r(1.5, 2, 29, 28, W) + r(4, 4.5, 24, 23, 'fill="#fafafa" stroke="#8a8886" stroke-width="1"') + p("M8 7v18", 'stroke="#8a8886" stroke-width="1.400"') + p("M10 10h15M10 20h15", 'stroke="#1565b8" stroke-width="2.400"') + p("M10 14h8M10 24h8", 'stroke="#8a8886" stroke-width="1.200"')],
        ["KPI", r(1.5, 4, 29, 24, W) + p("M5 18l5-8 5 8z", 'fill="#4caf6a" stroke="#2e8b4a"') + p("M16 9h10l-5 8z", 'fill="#f26b6b" stroke="#c33"') + p("M5 22h22", 'stroke="#8a8886" stroke-width="1.400"')],
        ["슬라이서", p("M16 29H1.500V3h29v10", W) + r(1.5, 3, 29, 4, G) + r(7, 12, 5, 5, G) + r(7, 20, 5, 5, G) + p("M16 17h15l-5 6v8h-5v-8z", W)],
        ["테이블", r(1.5, 2, 29, 28, W) + r(1.5, 2, 29, 6, G) + p("M1.500 15h29M1.500 22.500h29M11 8v22M21 8v22", 'stroke="#797775" stroke-width="1.400"') + r(1.5, 2, 29, 28, K)],
        ["행렬", r(1.5, 2, 29, 28, W) + r(1.5, 2, 29, 6, G) + r(1.5, 22, 29, 8, B) + r(21, 8, 9.5, 22, B) + p("M1.500 15h29M1.500 22h29M11 8v22M21 8v22", 'stroke="#4a6f96" stroke-width="1.200"') + r(1.5, 2, 29, 28, K)],
        ["주요 영향 요인", p("M2 7h20", 'stroke="#2b88d8" stroke-width="1.600"') + `<circle cx="25" cy="7" r="3.500" ${B}/>` + p("M2 15h15M2 22h9", 'stroke="#605e5c" stroke-width="1.300"') + `<circle cx="19" cy="15" r="2" ${G}/><circle cx="12" cy="22" r="2" ${G}/>` + axis],

        ["분해 트리", p("M12 16h8M20 6h-4v20h4", K) + r(1.5, 12, 11, 8, B) + r(19.5, 2, 11, 8, B) + r(19.5, 12, 11, 8, B) + r(19.5, 22, 11, 8, B)],
        ["질문 및 답변", p("M1.500 3h29v20H14l-6 7v-7H1.500z", 'fill="#fafafa" stroke="#1f6fbf" stroke-width="1.700"')],
        ["설명", p("M5 2h14l8 8v20H5z", W) + p("M19 2v8h8", K) + `<circle cx="4" cy="13" r="2.500" ${B}/>` + p("M11 15h11M8 20h10", 'stroke="#2b88d8" stroke-width="1.600"')],
        ["목표", p("M8 4h16v10a8 8 0 0 1-16 0zM8 5H2v4c0 5 4 7 7 7M24 5h6v4c0 5-4 7-7 7M16 22v5", W) + r(8, 2, 16, 4, B) + r(8, 27, 16, 3.5, B)],
        ["페이지를 매긴 보고서", p("M4 1.500h16l7 7v22H4z", W) + p("M20 2v7h7", K) + p("M10 27v-8M16 27v-4M22 27V15", 'stroke="#333" stroke-width="3.600"')],
        ["ArcGIS Maps", p("M12 3h18v13l-6 3-4 11H2V19z", 'fill="#fafafa" stroke="#1f6fbf" stroke-width="1.800"') + p("M19 30c3-3 0-7 4-9s6-3 7-6V8c-4 1-8 2-9 6s-5 4-7 7-1 7-3 9z", B) + p("M5 0a5 5 0 0 1 5 5v7l-5 5-5-5V5a5 5 0 0 1 5-5z", 'fill="#e07000"') + `<circle cx="5" cy="6" r="1.800" fill="#fff"/><circle cx="26" cy="27" r="4.200" fill="#e07000"/><circle cx="29.500" cy="19" r="2.400" fill="#e07000"/>`],

        ["Power Apps", p("M16 3l14 13-14 13L2 16zM12 8l10 9M22 8l-12 10M20 20l-8 6M11 6L3 15", 'fill="none" stroke="#8e3fa8" stroke-width="1.600" stroke-linejoin="round"')],
        ["Power Automate", p("M1.500 4h19l10 12-9 12h-20l11-12zM17 28L30 14M9 28L26 9", 'fill="none" stroke="#1f7fe0" stroke-width="1.600" stroke-linejoin="round"')],
        ["추가 시각적 개체 가져오기", '<g fill="#333"><circle cx="9" cy="14" r="1.400"/><circle cx="16" cy="14" r="1.400"/><circle cx="23" cy="14" r="1.400"/></g>'],
      ];
      document.getElementById("visuals").innerHTML = visuals
        .map(([name, art]) => {
          const cls = name === "여러 행 카드"
            ? "flex size-[64px] items-center justify-center border-[2px] border-[#252423] bg-[#f8f8f8]"
            : "flex size-[64px] items-center justify-center";
          return `<button class="${cls}" title="${name}" aria-label="${name}"><svg class="size-[52px]" viewBox="0 0 32 32">${art}</svg></button>`;
        })
        .join("");

      const fields = ["합계 금개", "합계 은개", "합계 동개", "합계 합계개"];
      document.getElementById("fields").insertAdjacentHTML(
        "beforeend",
        fields
          .map(
            (f) => `<div class="flex h-[59px] items-center rounded-[4px] border-[2px] border-[#c8c6c4] bg-[#edebe9] pl-[11px]">
              <span class="w-[326px]">${f}</span>
              <button class="ml-[18px]" aria-label="옵션"><svg class="size-[24px]"><use href="#chev" /></svg></button>
              <button class="ml-[21px]" aria-label="제거"><svg class="size-[20px]"><use href="#x" /></svg></button>
            </div>`
          )
          .join("")
      );

      // [kind, label, icon, checked]
      const tree = [
        ["table", "텍스트 보관용 테이블", "calcs"],
        ["field", "텍스트_개요", "calc"],
        ["field", "텍스트_메달 세...", "calc"],
        ["field", "텍스트_종목 세...", "calc"],
        ["table", "국가 테이블", "table", true],
        ["field", "국가", "", true],
        ["field", "국기", ""],
        ["field", "대륙", ""],
        ["field", "인원 수", ""],
        ["table", "국가별 종목별 메달 수", "table", true],
        ["field", "국가", ""],
        ["field", "금", "sigma", true],
        ["field", "동", "sigma", true],
        ["field", "은", "sigma", true],
        ["field", "종목", ""],
        ["folder", "측정값 모음", "folder"],
        ["field", "합계", "sigma", true],
        ["table", "종목 테이블", "table"],
        ["field", "종목", ""],
        ["field", "한 국가의 최대 ...", ""],
      ];
      document.getElementById("tree").innerHTML = tree
        .map(([kind, label, icon, on]) => {
          if (kind === "table") {
            return `<li class="flex h-[64px] items-center pl-[38px] whitespace-nowrap">
              <button aria-label="축소"><svg class="block size-[24px]"><use href="#chev" /></svg></button>
              <span class="relative ml-[14px] mr-[10px]"><svg class="block size-[38px]"><use href="#${icon}" /></svg>${
                on ? '<svg class="absolute top-[16px] left-[18px] size-[32px]" viewBox="0 0 24 24"><circle cx="12" cy="12" r="12" fill="#117865"/><path d="M7 12l4 4 6.500-7" fill="none" stroke="#fff" stroke-width="2.400"/></svg>' : ""
              }</span>${label}</li>`;
          }
          if (kind === "folder") {
            return `<li class="flex h-[64px] items-center pl-[80px] whitespace-nowrap">
              <button aria-label="확장"><svg class="block size-[22px] -rotate-90"><use href="#chev" /></svg></button>
              <svg class="mr-[9px] ml-[12px] size-[43px]"><use href="#folder" /></svg>${label}</li>`;
          }
          return `<li><label class="flex h-[64px] items-center pl-[118px] whitespace-nowrap">
            <span class="relative size-[32px] shrink-0"><input type="checkbox" ${on ? "checked" : ""} class="block size-[32px] appearance-none rounded-[4px] border-[2px] border-[#8a8886] checked:bg-[#117865]" />${
              on ? '<svg class="pointer-events-none absolute inset-0 size-[32px]" viewBox="0 0 24 24"><path d="M4.500 12l4.500 4 11-10" fill="none" stroke="#fff" stroke-width="1.700"/></svg>' : ""
            }</span>
            <svg class="mr-[13px] ml-[19px] size-[38px] shrink-0">${icon ? `<use href="#${icon}" />` : ""}</svg>${label}</label></li>`;
        })
        .join("");

      // bubble layers: grid origin, grid scale, height ratio of the grid cell, then x, y, radius
      const west = { o: [0, 0], s: [1, 1], k: 1.25 };
      const east = { o: [616.8, 339.7], s: [0.5333, 0.4355], k: 1.531 };
      const layers = [
        { g: west, fill: "#6b007b", stroke: "#4b0056", at: [[443, 446, 34], [434, 613, 45], [422, 696, 22], [556, 652, 9], [497, 699, 17], [509, 690, 11], [511, 723, 16], [549, 720, 14], [557, 720, 9], [467, 733, 12], [472, 728, 9], [478, 740, 8], [487, 760, 9], [502, 766, 8], [529, 718, 8], [538, 748, 8], [496, 716, 8], [572, 745, 10], [568, 750, 10], [571, 757, 9], [568, 738, 8]] },
        { g: west, fill: "#744ec2", stroke: "#4a2a92", at: [[527, 785, 20], [550, 767, 14], [578, 782, 8], [587, 785, 8], [503, 809, 16], [519, 834, 13], [597, 851, 32], [555, 880, 7], [579, 910, 14], [532, 952, 16], [555, 970, 24], [587, 958, 13]] },
        { g: east, fill: "#12239e", stroke: "#0a1270", at: [[196, 187, 17], [489, 227, 33], [388, 300, 42], [413, 303, 43], [486, 322, 24], [479, 357, 27], [475, 390, 29], [300, 405, 62], [263, 430, 45], [330, 535, 80], [295, 615, 71], [262, 627, 37], [378, 485, 74], [375, 375, 42], [345, 465, 45], [430, 445, 52], [385, 570, 62], [525, 485, 45], [505, 520, 27], [445, 495, 24], [410, 530, 42], [420, 520, 35], [485, 585, 31], [461, 632, 40], [552, 632, 39], [609, 605, 25], [632, 615, 32], [614, 608, 20], [412, 675, 17], [535, 687, 20], [549, 725, 39], [357, 480, 18], [382, 515, 14], [327, 587, 13], [365, 570, 16], [400, 567, 16], [440, 580, 18], [455, 600, 20], [450, 525, 45], [470, 560, 30]] },
        { g: east, fill: "#118dff", stroke: "#0a6fd6", at: [[268, 732, 33], [337, 768, 31], [380, 697, 25], [437, 781, 17], [514, 785, 47], [255, 855, 13], [160, 911, 18], [302, 900, 25], [378, 884, 18], [443, 905, 15], [513, 916, 15], [569, 899, 21], [220, 918, 20], [214, 935, 17], [250, 952, 20], [238, 978, 17], [255, 1008, 18], [280, 985, 18], [305, 945, 18], [308, 975, 20], [322, 972, 16], [333, 965, 15], [370, 967, 38], [450, 995, 15], [513, 985, 20], [570, 958, 23], [602, 945, 16], [645, 978, 11], [404, 1018, 17], [386, 1050, 15], [361, 1063, 15], [395, 1078, 16], [420, 1074, 15], [531, 1050, 25], [573, 1053, 36], [475, 1096, 16], [518, 1085, 17], [515, 1100, 16], [555, 1132, 18], [685, 1113, 16], [433, 1187, 25], [499, 1214, 26], [542, 1202, 15], [611, 1192, 16], [514, 1257, 16], [549, 1266, 17], [626, 1262, 18], [699, 1276, 21], [432, 1308, 16], [480, 1308, 19], [483, 1375, 47], [525, 1347, 16], [506, 1382, 14]] },
        { g: east, fill: "#e66c37", stroke: "#b93f0c", at: [[760, 505, 38], [742, 605, 38], [710, 628, 16], [815, 600, 22], [788, 640, 20], [757, 700, 16], [774, 752, 17], [611, 707, 23], [680, 714, 29], [632, 752, 17], [655, 795, 20], [650, 785, 15], [676, 812, 19], [696, 848, 15], [612, 811, 18], [635, 897, 16], [575, 690, 15], [553, 700, 16], [563, 730, 19], [1007, 524, 28], [1007, 665, 70], [1233, 665, 72], [1166, 665, 46], [1162, 620, 20], [844, 832, 43], [875, 766, 17], [918, 776, 15], [917, 815, 16], [958, 845, 13], [988, 910, 31], [1006, 875, 16], [1014, 932, 14], [1036, 928, 22], [1076, 831, 28], [1124, 901, 25], [853, 988, 17], [804, 1062, 17], [1007, 1051, 25], [1075, 1065, 26], [1079, 1028, 25], [1079, 1020, 16], [1154, 1156, 15]] },
        { g: east, fill: "#e044a7", stroke: "#b01a7c", at: [[1211, 989, 15], [1342, 983, 15], [1458, 1003, 16], [1427, 1071, 13], [1275, 1123, 18], [1376, 1130, 15], [1488, 1130, 14], [1427, 1224, 17], [1500, 1250, 28], [1211, 1336, 76], [1466, 1530, 53]] },
        { g: west, fill: "#e044a7", stroke: "#b01a7c", at: [[227, 796, 8], [174, 865, 13], [180, 867, 7], [165, 900, 8], [225, 903, 8]] },
      ];
      document.getElementById("bubbles").innerHTML = layers
        .map(({ g, fill, stroke, at }) =>
          `<g fill="${fill}" stroke="${stroke}" stroke-width="2.500">` +
          at.map(([x, y, rad]) => `<ellipse cx="${g.o[0] + x * g.s[0]}" cy="${g.o[1] + y * g.s[1]}" rx="${rad * g.s[0]}" ry="${rad * g.k * g.s[1]}" vector-effect="non-scaling-stroke"/>`).join("") +
          "</g>"
        )
        .join("");
    </script>
  </body>
</html>
